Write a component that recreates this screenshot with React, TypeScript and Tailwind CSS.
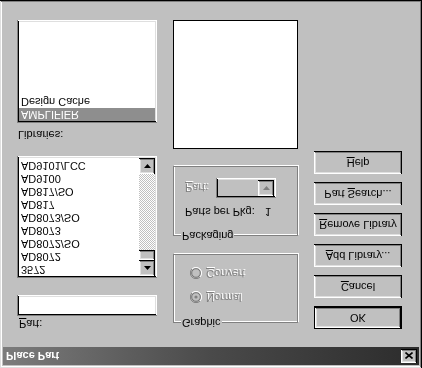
import React from 'react';

const raised =
  'shadow-[inset_-1px_-1px_#000,inset_1px_1px_#fff,inset_-2px_-2px_#808080,inset_2px_2px_#dfdfdf]';
const sunken =
  'shadow-[inset_1px_1px_#808080,inset_-1px_-1px_#fff,inset_2px_2px_#000,inset_-2px_-2px_#dfdfdf]';
const disabledText = 'text-[#808080] [text-shadow:1px_1px_0_#fff]';

const parts = ['3572', 'AD8072', 'AD8072/SO', 'AD8073', 'AD8073/SO', 'AD817', 'AD817/SO', 'AD9100', 'AD9101/LCC', 'AD9610'];

function Arrow({ up, color = '#000' }: { up?: boolean; color?: string }) {
  return (
    <svg width="7" height="4" viewBox="0 0 7 4">
      {up ? <path d="M3.5 0 L7 4 L0 4 Z" fill={color} /> : <path d="M0 0 L7 0 L3.5 4 Z" fill={color} />}
    </svg>
  );
}

function Btn({ children, main }: { children: React.ReactNode; main?: boolean }) {
  return (
    <div
      className={`h-[23px] flex items-center justify-center bg-[#c0c0c0] ${
        main ? 'border border-black shadow-[inset_-1px_-1px_#000,inset_1px_1px_#fff,inset_-2px_-2px_#808080,inset_2px_2px_#dfdfdf]' : raised
      }`}
    >
      {children}
    </div>
  );
}

function Group({ label, className, children }: { label: string; className: string; children: React.ReactNode }) {
  return (
    <div className={`relative border border-[#808080] shadow-[1px_1px_0_#fff,inset_1px_1px_0_#fff] ${className}`}>
      <span className="absolute -top-[7px] left-[7px] bg-[#c0c0c0] px-[1px] leading-[13px]">{label}</span>
      {children}
    </div>
  );
}

function Radio({ checked, label, mn }: { checked?: boolean; label: string; mn: string }) {
  return (
    <div className="flex items-center gap-[4px] h-[13px]">
      <svg width="12" height="12" viewBox="0 0 12 12">
        <path d="M10 2 A5.5 5.5 0 0 0 2 10" stroke="#808080" fill="none" />
        <path d="M2 10 A5.5 5.5 0 0 0 10 2" stroke="#fff" fill="none" />
        <circle cx="6" cy="6" r="4.3" fill="#c0c0c0" stroke="#404040" strokeWidth="0.6" />
        {checked && <circle cx="6" cy="6" r="1.6" fill="#808080" />}
      </svg>
      <span className={disabledText}>
        <span className="underline">{mn}</span>
        {label}
      </span>
    </div>
  );
}

export default function App() {
  return (
    <div className="-scale-y-100 w-[422px] h-[368px] bg-[#c0c0c0] p-[3px] flex flex-col text-black text-[11px] leading-[13px] font-['Liberation_Sans',Arial,sans-serif] shadow-[inset_-1px_-1px_#000,inset_1px_1px_#dfdfdf,inset_-2px_-2px_#808080,inset_2px_2px_#fff]">
      {/* Title bar */}
      <div className="h-[18px] flex items-center bg-gradient-to-r from-[#7c7c7c] via-[#4a4a4a] to-[#2c2c2c] pl-[3px] pr-[2px]">
        <span className="text-white font-bold">Place Part</span>
        <div className={`ml-auto w-[16px] h-[14px] bg-[#c0c0c0] flex items-center justify-center ${raised}`}>
          <svg width="8" height="7" viewBox="0 0 8 7">
            <path d="M0.5 0.5 L7.5 6.5 M7.5 0.5 L0.5 6.5" stroke="#000" strokeWidth="1.6" />
          </svg>
        </div>
      </div>

      <div className="flex flex-1 pl-[14px] gap-[16px]">
        {/* Left column */}
        <div className="w-[140px] flex flex-col">
          <span className="mt-[17px] pl-[2px]">
            <span className="underline">P</span>art:
          </span>
          <div className={`mt-[1px] h-[21px] bg-white ${sunken}`} />

          <div className={`mt-[17px] h-[122px] bg-white p-[2px] flex ${sunken}`}>
            <div className="flex-1 overflow-hidden pl-[2px]">
              {parts.map((p) => (
                <div key={p} className="h-[13px]">
                  {p}
                </div>
              ))}
            </div>
            <div className="w-[16px] flex flex-col bg-[repeating-conic-gradient(#fff_0_25%,#c0c0c0_0_50%)] [background-size:2px_2px]">
              <div className={`h-[16px] bg-[#c0c0c0] flex items-center justify-center ${raised}`}>
                <Arrow up />
              </div>
              <div className={`h-[10px] bg-[#c0c0c0] ${raised}`} />
              <div className="flex-1" />
              <div className={`h-[16px] bg-[#c0c0c0] flex items-center justify-center ${raised}`}>
                <Arrow />
              </div>
            </div>
          </div>

          <span className="mt-[15px] pl-[1px]">Libraries:</span>
          <div className={`mt-[5px] h-[103px] bg-white p-[2px] ${sunken}`}>
            <div className="h-[13px] bg-[#8e8e8e] text-white pl-[2px]">AMPLIFIER</div>
            <div className="h-[13px] pl-[2px]">Design Cache</div>
          </div>
        </div>

        {/* Middle column */}
        <div className="w-[125px] flex flex-col">
          <Group label="Graphic" className="mt-[24px] h-[69px] pt-[18px] pl-[16px] flex flex-col gap-[11px]">
            <Radio checked mn="N" label="ormal" />
            <Radio mn="C" label="onvert" />
          </Group>

          <Group label="Packaging" className="mt-[18px] h-[70px] pt-[17px] pl-[11px] flex flex-col">
            <div className="flex h-[13px]">
              <span className="w-[80px]">Parts per Pkg:</span>
              <span>1</span>
            </div>
            <div className="mt-[7px] flex items-center">
              <span className={`w-[31px] ${disabledText}`}>
                <span className="underline">P</span>art:
              </span>
              <div className={`w-[60px] h-[20px] bg-[#c0c0c0] p-[2px] flex justify-end ${sunken}`}>
                <div className={`w-[16px] bg-[#c0c0c0] flex items-center justify-center ${raised}`}>
                  <Arrow color="#808080" />
                </div>
              </div>
            </div>
          </Group>

          <div className="mt-[17px] h-[129px] bg-white border border-black" />
        </div>

        {/* Right column */}
        <div className="w-[88px] flex flex-col pt-[18px] gap-[8px]">
          <Btn main>OK</Btn>
          <Btn>
            <span>
              <span className="underline">C</span>ancel
            </span>
          </Btn>
          <Btn>
            <span>
              <span className="underline">A</span>dd Library...
            </span>
          </Btn>
          <Btn>
            <span>
              <span className="underline">R</span>emove Library
            </span>
          </Btn>
          <Btn>
            <span>
              Part <span className="underline">S</span>earch...
            </span>
          </Btn>
          <Btn>
            <span>
              <span className="underline">H</span>elp
            </span>
          </Btn>
        </div>
      </div>
    </div>
  );
}
